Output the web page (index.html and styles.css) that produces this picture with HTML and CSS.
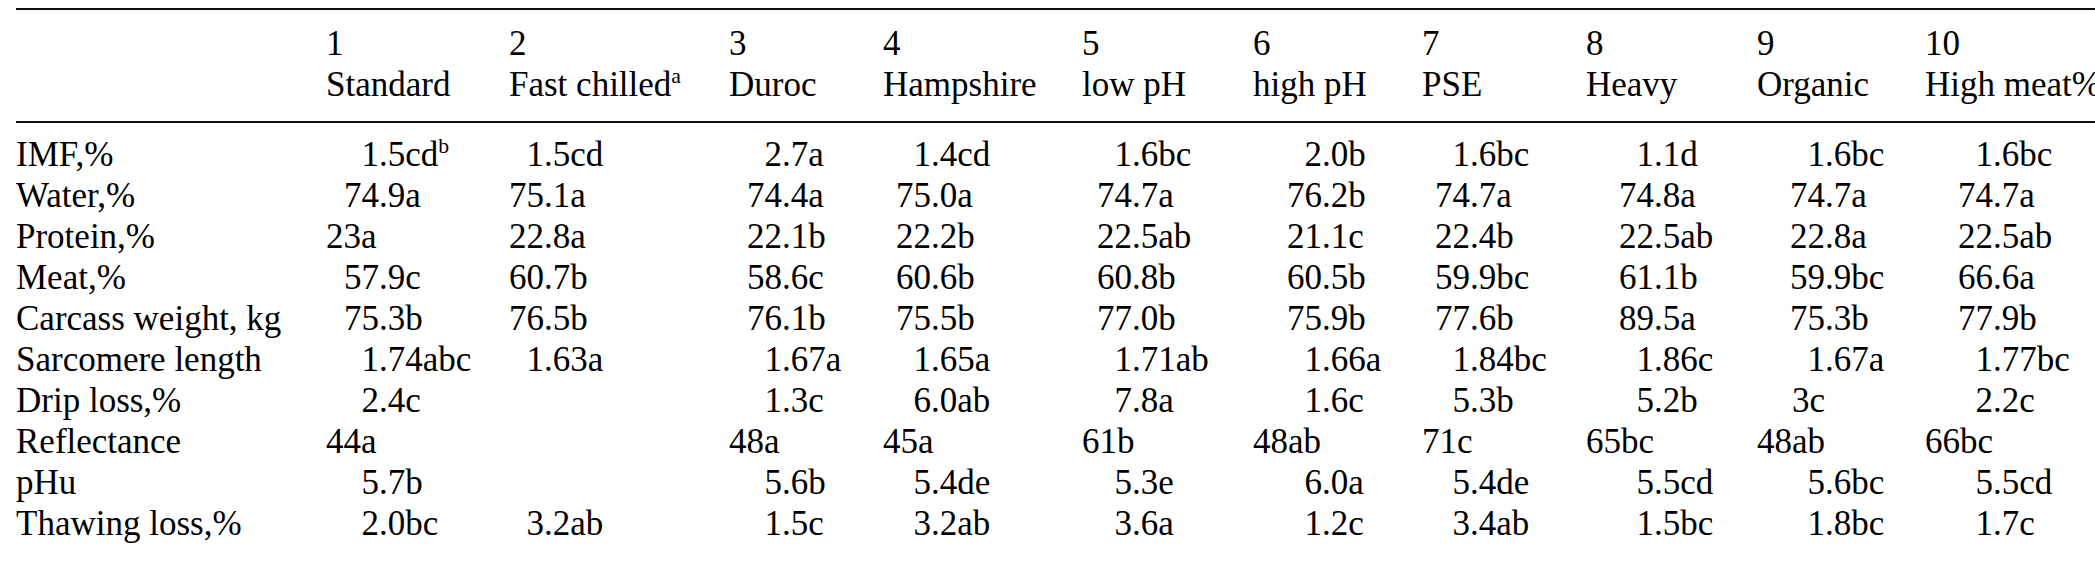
FILE: index.html
```html
<!DOCTYPE html>
<html lang="en">
<head>
<meta charset="utf-8">
<title>Table</title>
<link rel="stylesheet" href="styles.css">
</head>
<body>
<div class="sheet">
  <div class="table">
    <div class="head row">
      <div class="h"></div>
      <div class="h"><div>1</div><div>Standard</div></div>
      <div class="h"><div>2</div><div>Fast chilled<span class="sup">a</span></div></div>
      <div class="h"><div>3</div><div>Duroc</div></div>
      <div class="h"><div>4</div><div>Hampshire</div></div>
      <div class="h"><div>5</div><div>low pH</div></div>
      <div class="h"><div>6</div><div>high pH</div></div>
      <div class="h"><div>7</div><div>PSE</div></div>
      <div class="h"><div>8</div><div>Heavy</div></div>
      <div class="h"><div>9</div><div>Organic</div></div>
      <div class="h"><div>10</div><div>High meat%</div></div>
    </div>
    <div class="body">
      <div class="row">
        <div class="l">IMF,%</div>
        <div class="c"><span class="i">1</span>.5cd<span class="sup">b</span></div>
        <div class="c"><span class="i">1</span>.5cd</div>
        <div class="c"><span class="i">2</span>.7a</div>
        <div class="c"><span class="i">1</span>.4cd</div>
        <div class="c"><span class="i">1</span>.6bc</div>
        <div class="c"><span class="i">2</span>.0b</div>
        <div class="c"><span class="i">1</span>.6bc</div>
        <div class="c"><span class="i">1</span>.1d</div>
        <div class="c"><span class="i">1</span>.6bc</div>
        <div class="c"><span class="i">1</span>.6bc</div>
      </div>
      <div class="row">
        <div class="l">Water,%</div>
        <div class="c"><span class="i">74</span>.9a</div>
        <div class="c"><span class="i">75</span>.1a</div>
        <div class="c"><span class="i">74</span>.4a</div>
        <div class="c"><span class="i">75</span>.0a</div>
        <div class="c"><span class="i">74</span>.7a</div>
        <div class="c"><span class="i">76</span>.2b</div>
        <div class="c"><span class="i">74</span>.7a</div>
        <div class="c"><span class="i">74</span>.8a</div>
        <div class="c"><span class="i">74</span>.7a</div>
        <div class="c"><span class="i">74</span>.7a</div>
      </div>
      <div class="row">
        <div class="l">Protein,%</div>
        <div class="c">23a</div>
        <div class="c"><span class="i">22</span>.8a</div>
        <div class="c"><span class="i">22</span>.1b</div>
        <div class="c"><span class="i">22</span>.2b</div>
        <div class="c"><span class="i">22</span>.5ab</div>
        <div class="c"><span class="i">21</span>.1c</div>
        <div class="c"><span class="i">22</span>.4b</div>
        <div class="c"><span class="i">22</span>.5ab</div>
        <div class="c"><span class="i">22</span>.8a</div>
        <div class="c"><span class="i">22</span>.5ab</div>
      </div>
      <div class="row">
        <div class="l">Meat,%</div>
        <div class="c"><span class="i">57</span>.9c</div>
        <div class="c"><span class="i">60</span>.7b</div>
        <div class="c"><span class="i">58</span>.6c</div>
        <div class="c"><span class="i">60</span>.6b</div>
        <div class="c"><span class="i">60</span>.8b</div>
        <div class="c"><span class="i">60</span>.5b</div>
        <div class="c"><span class="i">59</span>.9bc</div>
        <div class="c"><span class="i">61</span>.1b</div>
        <div class="c"><span class="i">59</span>.9bc</div>
        <div class="c"><span class="i">66</span>.6a</div>
      </div>
      <div class="row">
        <div class="l">Carcass weight, kg</div>
        <div class="c"><span class="i">75</span>.3b</div>
        <div class="c"><span class="i">76</span>.5b</div>
        <div class="c"><span class="i">76</span>.1b</div>
        <div class="c"><span class="i">75</span>.5b</div>
        <div class="c"><span class="i">77</span>.0b</div>
        <div class="c"><span class="i">75</span>.9b</div>
        <div class="c"><span class="i">77</span>.6b</div>
        <div class="c"><span class="i">89</span>.5a</div>
        <div class="c"><span class="i">75</span>.3b</div>
        <div class="c"><span class="i">77</span>.9b</div>
      </div>
      <div class="row">
        <div class="l">Sarcomere length</div>
        <div class="c"><span class="i">1</span>.74abc</div>
        <div class="c"><span class="i">1</span>.63a</div>
        <div class="c"><span class="i">1</span>.67a</div>
        <div class="c"><span class="i">1</span>.65a</div>
        <div class="c"><span class="i">1</span>.71ab</div>
        <div class="c"><span class="i">1</span>.66a</div>
        <div class="c"><span class="i">1</span>.84bc</div>
        <div class="c"><span class="i">1</span>.86c</div>
        <div class="c"><span class="i">1</span>.67a</div>
        <div class="c"><span class="i">1</span>.77bc</div>
      </div>
      <div class="row">
        <div class="l">Drip loss,%</div>
        <div class="c"><span class="i">2</span>.4c</div>
        <div class="c"></div>
        <div class="c"><span class="i">1</span>.3c</div>
        <div class="c"><span class="i">6</span>.0ab</div>
        <div class="c"><span class="i">7</span>.8a</div>
        <div class="c"><span class="i">1</span>.6c</div>
        <div class="c"><span class="i">5</span>.3b</div>
        <div class="c"><span class="i">5</span>.2b</div>
        <div class="c"><span class="i">3c</span></div>
        <div class="c"><span class="i">2</span>.2c</div>
      </div>
      <div class="row">
        <div class="l">Reflectance</div>
        <div class="c">44a</div>
        <div class="c"></div>
        <div class="c">48a</div>
        <div class="c">45a</div>
        <div class="c">61b</div>
        <div class="c">48ab</div>
        <div class="c">71c</div>
        <div class="c">65bc</div>
        <div class="c">48ab</div>
        <div class="c">66bc</div>
      </div>
      <div class="row">
        <div class="l">pHu</div>
        <div class="c"><span class="i">5</span>.7b</div>
        <div class="c"></div>
        <div class="c"><span class="i">5</span>.6b</div>
        <div class="c"><span class="i">5</span>.4de</div>
        <div class="c"><span class="i">5</span>.3e</div>
        <div class="c"><span class="i">6</span>.0a</div>
        <div class="c"><span class="i">5</span>.4de</div>
        <div class="c"><span class="i">5</span>.5cd</div>
        <div class="c"><span class="i">5</span>.6bc</div>
        <div class="c"><span class="i">5</span>.5cd</div>
      </div>
      <div class="row">
        <div class="l">Thawing loss,%</div>
        <div class="c"><span class="i">2</span>.0bc</div>
        <div class="c"><span class="i">3</span>.2ab</div>
        <div class="c"><span class="i">1</span>.5c</div>
        <div class="c"><span class="i">3</span>.2ab</div>
        <div class="c"><span class="i">3</span>.6a</div>
        <div class="c"><span class="i">1</span>.2c</div>
        <div class="c"><span class="i">3</span>.4ab</div>
        <div class="c"><span class="i">1</span>.5bc</div>
        <div class="c"><span class="i">1</span>.8bc</div>
        <div class="c"><span class="i">1</span>.7c</div>
      </div>
    </div>
  </div>
</div>
</body>
</html>
```

FILE: styles.css
```css
html, body {
  margin: 0;
  padding: 0;
  background: #fff;
}

body {
  width: 2095px;
  height: 568px;
  overflow: hidden;
}

.sheet {
  padding: 8px 0 0 16px;
  font-family: "Liberation Serif", "Times New Roman", serif;
  font-size: 35px;
  line-height: 41px;
  color: #000;
  white-space: nowrap;
}

.table {
  width: 2109px;
}

.row {
  display: grid;
  grid-template-columns: 310px 183px 220px 154px 199px 171px 169px 164px 171px 168px 200px;
}

.head {
  border-top: 2px solid #111;
  border-bottom: 2px solid #111;
  padding: 13px 0 16px;
}

.body {
  padding-top: 11px;
}

.sup {
  font-size: 0.62em;
  vertical-align: super;
  line-height: 0;
}

.i {
  display: inline-block;
  text-align: right;
  width: var(--dp);
}

.row > :nth-child(2)  { --dp: 53px; }
.row > :nth-child(3)  { --dp: 35px; }
.row > :nth-child(4)  { --dp: 53px; }
.row > :nth-child(5)  { --dp: 48px; }
.row > :nth-child(6)  { --dp: 50px; }
.row > :nth-child(7)  { --dp: 69px; }
.row > :nth-child(8)  { --dp: 48px; }
.row > :nth-child(9)  { --dp: 68px; }
.row > :nth-child(10) { --dp: 68px; }
.row > :nth-child(11) { --dp: 68px; }
```
